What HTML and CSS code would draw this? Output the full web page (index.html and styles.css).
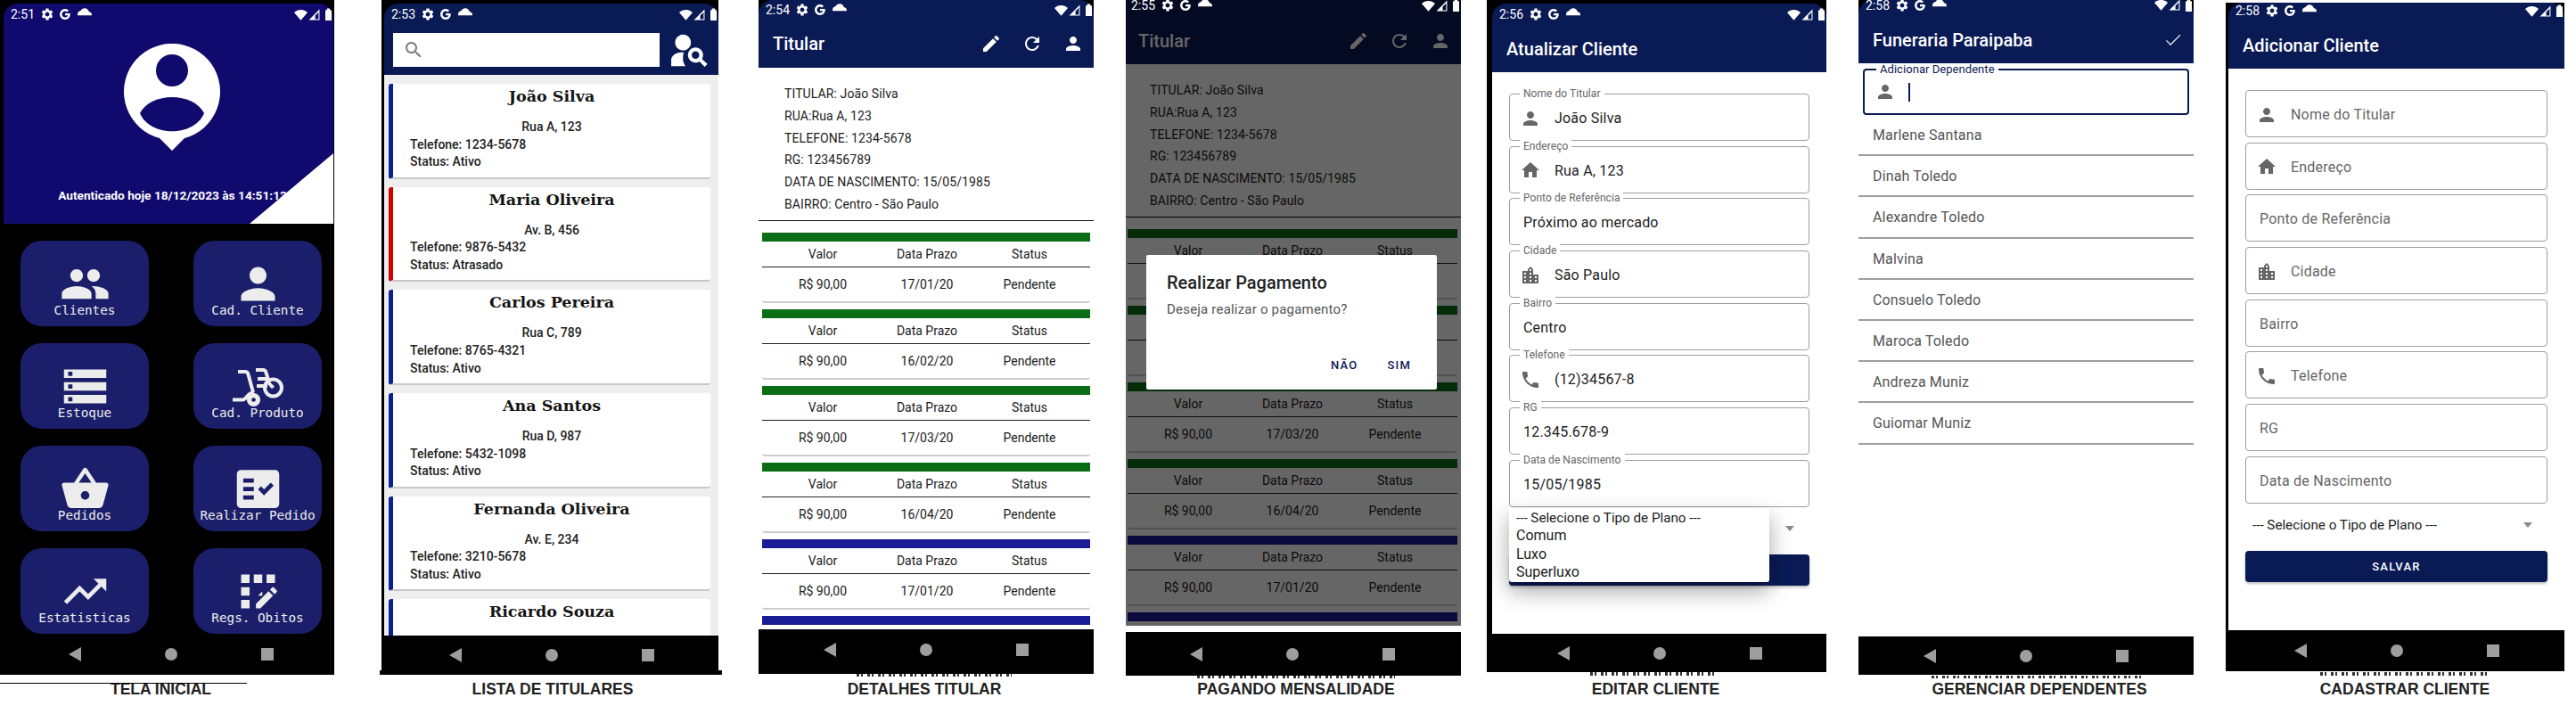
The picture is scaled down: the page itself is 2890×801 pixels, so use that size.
FILE: index.html
```html
<!DOCTYPE html>
<html lang="pt-BR">
<head>
<meta charset="utf-8">
<title>Telas do aplicativo</title>
<link rel="stylesheet" href="styles.css">
</head>
<body>
<svg class="sprite" aria-hidden="true">
  <symbol id="i-gear" viewBox="0 0 24 24"><path d="M19.14 12.94c.04-.3.06-.61.06-.94 0-.32-.02-.64-.07-.94l2.03-1.58c.18-.14.23-.41.12-.61l-1.92-3.32c-.12-.22-.37-.29-.59-.22l-2.39.96c-.5-.38-1.03-.7-1.62-.94l-.36-2.54c-.04-.24-.24-.41-.48-.41h-3.84c-.24 0-.43.17-.47.41l-.36 2.54c-.59.24-1.13.57-1.62.94l-2.39-.96c-.22-.08-.47 0-.59.22L2.74 8.87c-.12.21-.08.47.12.61l2.03 1.58c-.05.3-.09.63-.09.94s.02.64.07.94l-2.03 1.58c-.18.14-.23.41-.12.61l1.92 3.32c.12.22.37.29.59.22l2.39-.96c.5.38 1.03.7 1.62.94l.36 2.54c.05.24.24.41.48.41h3.84c.24 0 .44-.17.47-.41l.36-2.54c.59-.24 1.13-.56 1.62-.94l2.39.96c.22.08.47 0 .59-.22l1.92-3.32c.12-.22.07-.47-.12-.61l-2.01-1.58zM12 15.6c-1.98 0-3.6-1.62-3.6-3.6s1.62-3.6 3.6-3.6 3.6 1.62 3.6 3.6-1.62 3.6-3.6 3.6z"/></symbol>
  <symbol id="i-g" viewBox="0 0 24 24"><path d="M21.6 10.2H12v3.9h5.5c-.7 2.4-2.8 3.9-5.5 3.9-3.3 0-6-2.7-6-6s2.7-6 6-6c1.5 0 2.9.5 4 1.5l2.9-2.9C17 2.8 14.6 1.8 12 1.8 6.4 1.8 1.8 6.400 1.8 12S6.400 22.200 12 22.200c5.900 0 9.900-4.100 9.900-10 0-.7-.1-1.400-.3-2z"/></symbol>
  <symbol id="i-cloud" viewBox="0 0 24 24"><path d="M19.35 8.040C18.670 4.590 15.640 2 12 2 9.110 2 6.600 3.640 5.350 6.040 2.340 6.360 0 8.910 0 12v2h24v-1c0-2.640-2.050-4.780-4.650-4.960z"/></symbol>
  <symbol id="i-wifi" viewBox="0 0 24 24"><path d="M12 22L0 7.800C3.400 4.800 7.600 3 12 3s8.600 1.800 12 4.800z"/></symbol>
  <symbol id="i-cell" viewBox="0 0 24 24"><path fill-rule="evenodd" d="M23 1v22H1zM21 7l-7 7v7h7z"/></symbol>
  <symbol id="i-batt" viewBox="0 0 12 24"><path d="M3 4V1h6v3h2c.6 0 1 .4 1 1v18c0 .6-.4 1-1 1H1c-.6 0-1-.4-1-1V5c0-.6.4-1 1-1z"/></symbol>
  <symbol id="i-person" viewBox="0 0 24 24"><path d="M12 12c2.210 0 4-1.790 4-4s-1.790-4-4-4-4 1.790-4 4 1.790 4 4 4zm0 2c-2.670 0-8 1.340-8 4v2h16v-2c0-2.660-5.330-4-8-4z"/></symbol>
  <symbol id="i-people" viewBox="0 0 24 24"><path d="M16 11c1.660 0 2.990-1.340 2.990-3S17.660 5 16 5c-1.660 0-3 1.340-3 3s1.340 3 3 3zm-8 0c1.660 0 2.990-1.340 2.990-3S9.660 5 8 5C6.340 5 5 6.340 5 8s1.340 3 3 3zm0 2c-2.330 0-7 1.170-7 3.500V19h14v-2.500c0-2.330-4.670-3.500-7-3.500zm8 0c-.29 0-.62.02-.97.05 1.160.84 1.970 1.970 1.970 3.450V19h6v-2.500c0-2.330-4.670-3.500-7-3.500z"/></symbol>
  <symbol id="i-storage" viewBox="0 0 24 24"><path d="M2 20h20v-4H2v4zm2-3h2v2H4v-2zM2 4v4h20V4H2zm4 3H4V5h2v2zm-4 7h20v-4H2v4zm2-3h2v2H4v-2z"/></symbol>
  <symbol id="i-basket" viewBox="0 0 24 24"><path d="M17.210 9l-4.380-6.560c-.19-.28-.51-.42-.83-.42-.32 0-.64.14-.83.43L6.790 9H2c-.55 0-1 .45-1 1 0 .09.01.18.04.27l2.540 9.270c.23.840 1 1.460 1.920 1.460h13c.92 0 1.690-.62 1.930-1.460l2.540-9.270L23 10c0-.55-.45-1-1-1h-4.790zM9 9l3-4.400L15 9H9zm3 8c-1.100 0-2-.9-2-2s.9-2 2-2 2 .9 2 2-.9 2-2 2z"/></symbol>
  <symbol id="i-check-list" viewBox="0 0 24 24"><path d="M20 3H4c-1.100 0-2 .9-2 2v14c0 1.100.9 2 2 2h16c1.100 0 2-.9 2-2V5c0-1.100-.9-2-2-2zM10 17H5v-2h5v2zm0-4H5v-2h5v2zm0-4H5V7h5v2zm4.820 6L12 12.160l1.410-1.410 1.410 1.420L17.990 9l1.420 1.420L14.820 15z"/></symbol>
  <symbol id="i-trend" viewBox="0 0 24 24"><path d="M16 6l2.290 2.290-4.880 4.880-4-4L2 16.590 3.410 18l6-6 4 4 6.300-6.290L22 12V6z"/></symbol>
  <symbol id="i-reg" viewBox="0 0 24 24"><path d="M10 4h4v4h-4zM4 16h4v4H4zM4 10h4v4H4zM10 10h4v4h-4zM16 4h4v4h-4zM11 17.860V20h2.100l5.980-5.970-2.120-2.120zM14 12.030V10h-4v4h2.030zM20.850 11.560l-1.410-1.410c-.2-.2-.51-.2-.71 0l-1.060 1.060 2.120 2.120 1.060-1.060c.2-.2.2-.51 0-.71zM4 4h4v4H4z"/></symbol>
  <symbol id="i-edit" viewBox="0 0 24 24"><path d="M3 17.250V21h3.750L17.810 9.940l-3.750-3.750L3 17.250zM20.710 7.040c.39-.39.39-1.020 0-1.410l-2.340-2.340c-.39-.39-1.020-.39-1.410 0l-1.830 1.830 3.750 3.750 1.830-1.830z"/></symbol>
  <symbol id="i-refresh" viewBox="0 0 24 24"><path d="M17.650 6.350C16.200 4.900 14.210 4 12 4c-4.420 0-7.990 3.580-7.990 8s3.570 8 7.990 8c3.730 0 6.840-2.550 7.730-6h-2.080c-.82 2.330-3.040 4-5.650 4-3.310 0-6-2.690-6-6s2.690-6 6-6c1.660 0 3.140.69 4.220 1.780L13 11h7V4l-2.350 2.350z"/></symbol>
  <symbol id="i-home" viewBox="0 0 24 24"><path d="M10 20v-6h4v6h5v-8h3L12 3 2 12h3v8z"/></symbol>
  <symbol id="i-city" viewBox="0 0 24 24"><path d="M15 11V5l-3-3-3 3v2H3v14h18V11h-6zm-8 8H5v-2h2v2zm0-4H5v-2h2v2zm0-4H5V9h2v2zm6 8h-2v-2h2v2zm0-4h-2v-2h2v2zm0-4h-2V9h2v2zm0-4h-2V5h2v2zm6 12h-2v-2h2v2zm0-4h-2v-2h2v2z"/></symbol>
  <symbol id="i-phone" viewBox="0 0 24 24"><path d="M6.620 10.790c1.440 2.830 3.760 5.140 6.590 6.590l2.200-2.200c.27-.27.67-.36 1.020-.24 1.120.37 2.330.57 3.570.57.55 0 1 .45 1 1V20c0 .55-.45 1-1 1-9.390 0-17-7.610-17-17 0-.55.45-1 1-1h3.500c.55 0 1 .45 1 1 0 1.250.2 2.450.57 3.570.11.35.03.74-.25 1.020l-2.200 2.200z"/></symbol>
  <symbol id="i-check" viewBox="0 0 24 24"><path d="M9 16.170L4.830 12l-.8.8L9 18 20.500 6.500l-.8-.8z"/></symbol>
  <symbol id="i-search" viewBox="0 0 24 24"><path d="M15.500 14h-.79l-.28-.27C15.410 12.590 16 11.110 16 9.500 16 5.910 13.090 3 9.500 3S3 5.910 3 9.500 5.910 16 9.500 16c1.610 0 3.090-.59 4.230-1.570l.27.28v.79l5 4.990L20.490 19l-4.990-5zm-6 0C7.010 14 5 11.990 5 9.500S7.010 5 9.500 5 14 7.010 14 9.500 11.990 14 9.500 14z"/></symbol>
  <symbol id="i-person-search" viewBox="0 0 24 24"><path d="M11 12c2.210 0 4-1.790 4-4s-1.790-4-4-4-4 1.790-4 4 1.790 4 4 4zm.32 1.010C8.450 12.830 5 14.080 5 17v3h7.260c-.66-.87-1.110-1.970-1.260-3.180-.13-1.080.12-2.880.32-3.810zM20.590 16.450c.36-.59.58-1.280.58-2.020 0-2.130-1.710-3.850-3.840-3.850S13.500 12.300 13.500 14.430s1.720 3.850 3.830 3.850c.74 0 1.430-.22 2.010-.58L22 20.360l1.410-1.410-2.820-2.500zm-3.250-.17c-1.060 0-1.920-.86-1.920-1.920s.86-1.920 1.920-1.920 1.920.86 1.920 1.920-.86 1.920-1.920 1.920z"/></symbol>
  <symbol id="i-back" viewBox="0 0 14 16"><path d="M14 0v16L0 8z"/></symbol>
  <symbol id="i-wheel" viewBox="0 0 57 57">
    <g fill="none" stroke="currentColor" stroke-width="4">
      <path d="M6 12h8c2 0 3 1 3.500 3L23 35"/>
      <path d="M26 10h8c2 0 3 1 3.500 3L41 24"/>
      <path d="M28 20h12M27 28h12"/>
      <circle cx="45.500" cy="30" r="9.500"/>
      <path d="M38 22l7.500 8"/>
      <path d="M0 43.500h11c5 0 5-8 13-8"/>
    </g>
    <path d="M23.500 36a7.500 7.500 0 1 0 .01 0zm0 5.200a2.300 2.300 0 1 1-.01 0z" fill="currentColor"/>
  </symbol>
</svg>

<main class="gallery">

  <section class="shot s1">
    <div class="phone">
      <header class="hero">
        <div class="status"><span class="time">2:51</span><svg class="si"><use href="#i-gear"/></svg><svg class="si g"><use href="#i-g"/></svg><svg class="si"><use href="#i-cloud"/></svg><span class="status-right"><svg class="si w"><use href="#i-wifi"/></svg><svg class="si c"><use href="#i-cell"/></svg><svg class="si b"><use href="#i-batt"/></svg></span></div>
        <svg class="logo" viewBox="0 0 120 120">
          <path class="logo-bg" d="M46 106L60 120 74 106A54 54 0 1 0 46 106z"/>
          <circle class="logo-fg" cx="60" cy="30" r="18"/>
          <path class="logo-fg" d="M24 78C36 54 84 54 96 78 85 105 35 105 24 78z"/>
        </svg>
        <p class="auth">Autenticado hoje 18/12/2023 às 14:51:13</p>
      </header>
      <div class="tiles">
        <a class="tile"><svg class="tile-ic"><use href="#i-people"/></svg><span>Clientes</span></a>
        <a class="tile"><svg class="tile-ic"><use href="#i-person"/></svg><span>Cad. Cliente</span></a>
        <a class="tile"><svg class="tile-ic"><use href="#i-storage"/></svg><span>Estoque</span></a>
        <a class="tile"><svg class="tile-ic"><use href="#i-wheel"/></svg><span>Cad. Produto</span></a>
        <a class="tile"><svg class="tile-ic"><use href="#i-basket"/></svg><span>Pedidos</span></a>
        <a class="tile"><svg class="tile-ic"><use href="#i-check-list"/></svg><span>Realizar Pedido</span></a>
        <a class="tile"><svg class="tile-ic"><use href="#i-trend"/></svg><span>Estatisticas</span></a>
        <a class="tile"><svg class="tile-ic"><use href="#i-reg"/></svg><span>Regs. Obitos</span></a>
      </div>
      <nav class="nav"><svg class="nav-back"><use href="#i-back"/></svg><i class="nav-dot"></i><i class="nav-sq"></i></nav>
    </div>
    <div class="caption">TELA INICIAL</div>
  </section>

  <section class="shot s2">
    <div class="phone">
      <header class="bar">
        <div class="status"><span class="time">2:53</span><svg class="si"><use href="#i-gear"/></svg><svg class="si g"><use href="#i-g"/></svg><svg class="si"><use href="#i-cloud"/></svg><span class="status-right"><svg class="si w"><use href="#i-wifi"/></svg><svg class="si c"><use href="#i-cell"/></svg><svg class="si b"><use href="#i-batt"/></svg></span></div>
        <div class="search-row">
          <div class="search-box"><svg class="search-ic"><use href="#i-search"/></svg></div>
          <svg class="search-person"><use href="#i-person-search"/></svg>
        </div>
      </header>
      <div class="screen list-screen">
        <article class="card"><h2>João Silva</h2><p class="addr">Rua A, 123</p><p>Telefone: 1234-5678</p><p>Status: Ativo</p></article>
        <article class="card late"><h2>Maria Oliveira</h2><p class="addr">Av. B, 456</p><p>Telefone: 9876-5432</p><p>Status: Atrasado</p></article>
        <article class="card"><h2>Carlos Pereira</h2><p class="addr">Rua C, 789</p><p>Telefone: 8765-4321</p><p>Status: Ativo</p></article>
        <article class="card"><h2>Ana Santos</h2><p class="addr">Rua D, 987</p><p>Telefone: 5432-1098</p><p>Status: Ativo</p></article>
        <article class="card"><h2>Fernanda Oliveira</h2><p class="addr">Av. E, 234</p><p>Telefone: 3210-5678</p><p>Status: Ativo</p></article>
        <article class="card"><h2>Ricardo Souza</h2></article>
      </div>
      <nav class="nav"><svg class="nav-back"><use href="#i-back"/></svg><i class="nav-dot"></i><i class="nav-sq"></i></nav>
    </div>
    <div class="caption">LISTA DE TITULARES</div>
  </section>

  <section class="shot s3">
    <div class="phone">
      <header class="bar">
        <div class="status"><span class="time">2:54</span><svg class="si"><use href="#i-gear"/></svg><svg class="si g"><use href="#i-g"/></svg><svg class="si"><use href="#i-cloud"/></svg><span class="status-right"><svg class="si w"><use href="#i-wifi"/></svg><svg class="si c"><use href="#i-cell"/></svg><svg class="si b"><use href="#i-batt"/></svg></span></div>
        <div class="title-row"><h1>Titular</h1><span class="actions"><svg><use href="#i-edit"/></svg><svg><use href="#i-refresh"/></svg><svg><use href="#i-person"/></svg></span></div>
      </header>
      <div class="screen">
        <div class="details"><p>TITULAR: João Silva</p><p>RUA:Rua A, 123</p><p>TELEFONE: 1234-5678</p><p>RG: 123456789</p><p>DATA DE NASCIMENTO: 15/05/1985</p><p>BAIRRO: Centro - São Paulo</p></div>
        <div class="payments">
          <div class="pay"><div class="pay-head"><span>Valor</span><span>Data Prazo</span><span>Status</span></div><div class="pay-row"><span>R$ 90,00</span><span>17/01/20</span><span>Pendente</span></div></div>
          <div class="pay"><div class="pay-head"><span>Valor</span><span>Data Prazo</span><span>Status</span></div><div class="pay-row"><span>R$ 90,00</span><span>16/02/20</span><span>Pendente</span></div></div>
          <div class="pay"><div class="pay-head"><span>Valor</span><span>Data Prazo</span><span>Status</span></div><div class="pay-row"><span>R$ 90,00</span><span>17/03/20</span><span>Pendente</span></div></div>
          <div class="pay"><div class="pay-head"><span>Valor</span><span>Data Prazo</span><span>Status</span></div><div class="pay-row"><span>R$ 90,00</span><span>16/04/20</span><span>Pendente</span></div></div>
          <div class="pay blue"><div class="pay-head"><span>Valor</span><span>Data Prazo</span><span>Status</span></div><div class="pay-row"><span>R$ 90,00</span><span>17/01/20</span><span>Pendente</span></div></div>
          <div class="pay blue"><div class="pay-head"><span>Valor</span><span>Data Prazo</span><span>Status</span></div></div>
        </div>
      </div>
      <nav class="nav"><svg class="nav-back"><use href="#i-back"/></svg><i class="nav-dot"></i><i class="nav-sq"></i></nav>
    </div>
    <div class="caption">DETALHES TITULAR</div>
  </section>

  <section class="shot s4">
    <div class="phone">
      <div class="dim-area">
        <header class="bar">
          <div class="status"><span class="time">2:55</span><svg class="si"><use href="#i-gear"/></svg><svg class="si g"><use href="#i-g"/></svg><svg class="si"><use href="#i-cloud"/></svg><span class="status-right"><svg class="si w"><use href="#i-wifi"/></svg><svg class="si c"><use href="#i-cell"/></svg><svg class="si b"><use href="#i-batt"/></svg></span></div>
          <div class="title-row"><h1>Titular</h1><span class="actions"><svg><use href="#i-edit"/></svg><svg><use href="#i-refresh"/></svg><svg><use href="#i-person"/></svg></span></div>
        </header>
        <div class="screen">
          <div class="details"><p>TITULAR: João Silva</p><p>RUA:Rua A, 123</p><p>TELEFONE: 1234-5678</p><p>RG: 123456789</p><p>DATA DE NASCIMENTO: 15/05/1985</p><p>BAIRRO: Centro - São Paulo</p></div>
          <div class="payments">
            <div class="pay"><div class="pay-head"><span>Valor</span><span>Data Prazo</span><span>Status</span></div><div class="pay-row"></div></div>
            <div class="pay"><div class="pay-head"></div><div class="pay-row"></div></div>
            <div class="pay"><div class="pay-head"><span>Valor</span><span>Data Prazo</span><span>Status</span></div><div class="pay-row"><span>R$ 90,00</span><span>17/03/20</span><span>Pendente</span></div></div>
            <div class="pay"><div class="pay-head"><span>Valor</span><span>Data Prazo</span><span>Status</span></div><div class="pay-row"><span>R$ 90,00</span><span>16/04/20</span><span>Pendente</span></div></div>
            <div class="pay blue"><div class="pay-head"><span>Valor</span><span>Data Prazo</span><span>Status</span></div><div class="pay-row"><span>R$ 90,00</span><span>17/01/20</span><span>Pendente</span></div></div>
            <div class="pay blue"><div class="pay-head"></div></div>
          </div>
        </div>
        <div class="scrim"></div>
        <div class="dialog">
          <h3>Realizar Pagamento</h3>
          <p>Deseja realizar o pagamento?</p>
          <div class="dialog-actions"><span>NÃO</span><span>SIM</span></div>
        </div>
      </div>
      <div class="strip"></div>
      <nav class="nav"><svg class="nav-back"><use href="#i-back"/></svg><i class="nav-dot"></i><i class="nav-sq"></i></nav>
    </div>
    <div class="caption">PAGANDO MENSALIDADE</div>
  </section>

  <section class="shot s5">
    <div class="phone">
      <header class="bar">
        <div class="status"><span class="time">2:56</span><svg class="si"><use href="#i-gear"/></svg><svg class="si g"><use href="#i-g"/></svg><svg class="si"><use href="#i-cloud"/></svg><span class="status-right"><svg class="si w"><use href="#i-wifi"/></svg><svg class="si c"><use href="#i-cell"/></svg><svg class="si b"><use href="#i-batt"/></svg></span></div>
        <div class="title-row"><h1>Atualizar Cliente</h1></div>
      </header>
      <div class="screen form">
        <div class="field"><label>Nome do Titular</label><svg class="f-ic"><use href="#i-person"/></svg><span>João Silva</span></div>
        <div class="field"><label>Endereço</label><svg class="f-ic"><use href="#i-home"/></svg><span>Rua A, 123</span></div>
        <div class="field"><label>Ponto de Referência</label><span>Próximo ao mercado</span></div>
        <div class="field"><label>Cidade</label><svg class="f-ic"><use href="#i-city"/></svg><span>São Paulo</span></div>
        <div class="field"><label>Bairro</label><span>Centro</span></div>
        <div class="field"><label>Telefone</label><svg class="f-ic"><use href="#i-phone"/></svg><span>(12)34567-8</span></div>
        <div class="field"><label>RG</label><span>12.345.678-9</span></div>
        <div class="field"><label>Data de Nascimento</label><span>15/05/1985</span></div>
        <div class="select-wrap">
          <div class="select"><i class="caret"></i></div>
          <ul class="popup"><li>--- Selecione o Tipo de Plano ---</li><li>Comum</li><li>Luxo</li><li>Superluxo</li></ul>
        </div>
        <div class="save"></div>
      </div>
      <nav class="nav"><svg class="nav-back"><use href="#i-back"/></svg><i class="nav-dot"></i><i class="nav-sq"></i></nav>
    </div>
    <div class="caption">EDITAR CLIENTE</div>
  </section>

  <section class="shot s6">
    <div class="phone">
      <header class="bar">
        <div class="status"><span class="time">2:58</span><svg class="si"><use href="#i-gear"/></svg><svg class="si g"><use href="#i-g"/></svg><svg class="si"><use href="#i-cloud"/></svg><span class="status-right"><svg class="si w"><use href="#i-wifi"/></svg><svg class="si c"><use href="#i-cell"/></svg><svg class="si b"><use href="#i-batt"/></svg></span></div>
        <div class="title-row"><h1>Funeraria Paraipaba</h1><span class="actions"><svg><use href="#i-check"/></svg></span></div>
      </header>
      <div class="screen">
        <div class="field focused"><label>Adicionar Dependente</label><svg class="f-ic"><use href="#i-person"/></svg><i class="input-caret"></i></div>
        <ul class="names">
          <li>Marlene Santana</li><li>Dinah Toledo</li><li>Alexandre Toledo</li><li>Malvina</li><li>Consuelo Toledo</li><li>Maroca Toledo</li><li>Andreza Muniz</li><li>Guiomar Muniz</li>
        </ul>
      </div>
      <nav class="nav"><svg class="nav-back"><use href="#i-back"/></svg><i class="nav-dot"></i><i class="nav-sq"></i></nav>
    </div>
    <div class="caption">GERENCIAR DEPENDENTES</div>
  </section>

  <section class="shot s7">
    <div class="phone">
      <header class="bar">
        <div class="status"><span class="time">2:58</span><svg class="si"><use href="#i-gear"/></svg><svg class="si g"><use href="#i-g"/></svg><svg class="si"><use href="#i-cloud"/></svg><span class="status-right"><svg class="si w"><use href="#i-wifi"/></svg><svg class="si c"><use href="#i-cell"/></svg><svg class="si b"><use href="#i-batt"/></svg></span></div>
        <div class="title-row"><h1>Adicionar Cliente</h1></div>
      </header>
      <div class="screen form">
        <div class="field empty"><svg class="f-ic"><use href="#i-person"/></svg><span>Nome do Titular</span></div>
        <div class="field empty"><svg class="f-ic"><use href="#i-home"/></svg><span>Endereço</span></div>
        <div class="field empty"><span>Ponto de Referência</span></div>
        <div class="field empty"><svg class="f-ic"><use href="#i-city"/></svg><span>Cidade</span></div>
        <div class="field empty"><span>Bairro</span></div>
        <div class="field empty"><svg class="f-ic"><use href="#i-phone"/></svg><span>Telefone</span></div>
        <div class="field empty"><span>RG</span></div>
        <div class="field empty"><span>Data de Nascimento</span></div>
        <div class="select-wrap">
          <div class="select"><span>--- Selecione o Tipo de Plano ---</span><i class="caret"></i></div>
        </div>
        <button class="save">SALVAR</button>
      </div>
      <nav class="nav"><svg class="nav-back"><use href="#i-back"/></svg><i class="nav-dot"></i><i class="nav-sq"></i></nav>
    </div>
    <div class="caption">CADASTRAR CLIENTE</div>
  </section>

</main>
</body>
</html>
```

FILE: styles.css
```css
* { box-sizing: border-box; }
html, body { margin: 0; background: #fff; }
body { width: 2890px; height: 801px; overflow: hidden; font-family: Roboto, "Liberation Sans", sans-serif; color: #1c1c1c; }
p, h1, h2, h3, ul { margin: 0; padding: 0; }
ul { list-style: none; }
svg { display: block; fill: currentColor; }
.sprite { position: absolute; width: 0; height: 0; }

.gallery { display: flex; align-items: flex-start; }
.shot { flex: none; display: flex; flex-direction: column; }
.s1 { width: 375px; }
.s2 { width: 378px; margin-left: 53px; }
.s3 { width: 376px; margin-left: 45px; }
.s4 { width: 376px; margin-left: 36px; }
.s5 { width: 381px; margin-left: 29px; }
.s6 { width: 376px; margin-left: 36px; }
.s7 { width: 380px; margin-left: 36px; }

.phone { height: 757px; background: #000; display: flex; flex-direction: column; flex: none; }
.s1 .phone { padding: 4px 1px 0 4px; }
.s2 .phone { padding: 4px 0 0 3px; }
.s3 .phone { height: 756px; }
.s4 .phone { height: 758px; overflow: hidden; background: #fff; }
.s5 .phone { padding: 4px 0 0 6px; height: 754px; }
.s7 .phone { padding: 0 0 0 3px; margin-top: 3px; height: 750px; }

.bar { flex: none; background: #0a1a55; color: #fff; border-radius: 16px 16px 0 0; }
.status { display: flex; align-items: center; height: 24px; padding: 0 2px 0 8px; color: #fff; font-size: 14px; }
.s3 .status { height: 22px; }
.s4 .status { height: 12px; position: relative; z-index: 1; }
.s6 .status { height: 11px; }
.s7 .status { height: 18px; }
.time { width: 33px; }
.si { width: 16px; height: 16px; margin-right: 5px; flex: none; }
.si.g { width: 14px; height: 14px; margin: 0 7px 0 0; }
.status-right { margin-left: auto; display: flex; align-items: center; }
.si.w { width: 15px; height: 15px; margin-right: 1px; }
.si.c { width: 13px; height: 13px; margin-right: 6px; }
.si.b { width: 7px; height: 14px; margin: 0; }

.title-row { display: flex; align-items: center; justify-content: space-between; height: 54px; padding: 0 11px 0 16px; }
.s4 .title-row { height: 60px; padding-top: 7px; }
.s5 .title-row { height: 53px; }
.s6 .title-row { height: 60px; padding-top: 8px; }
.s7 .title-row { height: 56px; padding-top: 4px; }
h1 { font-size: 20px; font-weight: 500; }
.actions { display: flex; gap: 22px; }
.actions svg { width: 24px; height: 24px; }

.screen { flex: 1; min-height: 0; background: #fff; overflow: hidden; }

.nav { flex: none; height: 44px; display: flex; align-items: center; justify-content: center; gap: 94px; background: #000; position: relative; }
.nav-back { width: 14px; height: 16px; color: #9e9e9e; }
.nav-dot { width: 14px; height: 14px; border-radius: 50%; background: #9e9e9e; }
.nav-sq { width: 14px; height: 14px; background: #9e9e9e; }
.s1 .nav { height: 46px; padding-left: 6px; }
.s2 .nav::after { content: ""; position: absolute; left: -5px; right: -4px; bottom: 0; height: 5px; background: #000; }
.s3 .nav { height: 50px; padding-bottom: 4px; }
.s4 .nav { height: 49px; padding-right: 3px; }
.s5 .nav { height: 43px; }
.s6 .nav { height: 43px; }
.s7 .nav { height: 46px; }

.caption { height: 18px; margin-top: 7px; font: 700 17.500px/18px "Liberation Sans", Arial, sans-serif; color: #222; text-align: center; white-space: nowrap; position: relative; }
.s1 .caption { padding-right: 14px; }
.s2 .caption { padding-left: 6px; }
.s3 .caption { padding-right: 4px; margin-top: 8px; }
.s4 .caption { padding-left: 6px; margin-top: 6px; }
.s5 .caption { padding-right: 2px; margin-top: 10px; }
.s6 .caption { padding-left: 30px; }
.s7 .caption { padding-left: 22px; margin-top: 11px; }
.s1 .caption::before { content: ""; position: absolute; left: 0; top: 2px; width: 277px; height: 1px; background: #000; }
.s3 .caption::before, .s4 .caption::before, .s5 .caption::before, .s6 .caption::before, .s7 .caption::before { content: ""; position: absolute; top: -8px; height: 3px; background: repeating-linear-gradient(90deg, #333 0 3px, transparent 3px 5px, #333 5px 7px, transparent 7px 12px); }
.s3 .caption::before { left: 110px; width: 174px; }
.s4 .caption::before { left: 80px; width: 222px; top: -6px; }
.s5 .caption::before { left: 116px; width: 144px; top: -10px; height: 4px; }
.s6 .caption::before { left: 82px; width: 240px; top: -6px; }
.s7 .caption::before { left: 106px; width: 190px; top: -10px; height: 4px; }

/* tela inicial */
.hero { flex: none; height: 247px; padding-left: 9px; background: #100a6e; color: #fff; border-radius: 16px 16px 0 0; position: relative; display: flex; flex-direction: column; align-items: center; overflow: hidden; }
.hero::after { content: ""; position: absolute; right: 0; bottom: 0; width: 94px; height: 79px; background: #fff; clip-path: polygon(100% 0, 100% 100%, 0 100%); }
.hero .status { align-self: stretch; flex: none; margin-left: -9px; }
.logo { width: 120px; height: 120px; margin: 21px 2px 0 0; flex: none; }
.logo-bg { fill: #fff; }
.logo-fg { fill: #100a6e; }
.auth { margin-top: 41px; font-size: 13.700px; font-weight: 700; line-height: 18px; white-space: nowrap; }
.tiles { display: grid; grid-template-columns: 144px 144px; grid-auto-rows: 96px; column-gap: 50px; row-gap: 19px; padding: 19px 0 0 19px; flex: 1; min-height: 0; }
.tile { background: #1b1f6b; border-radius: 24px; color: #ececec; display: flex; flex-direction: column; align-items: center; padding-top: 20px; font: 14.300px/20px "DejaVu Sans Mono", "Liberation Mono", monospace; }
.tile-ic { width: 57px; height: 57px; margin-bottom: -9px; }
.tile span { position: relative; white-space: nowrap; }

/* lista */
.search-row { display: flex; align-items: center; height: 56px; padding-left: 10px; }
.search-box { width: 299px; height: 38px; background: #fff; color: #7a7a7a; display: flex; align-items: center; padding-left: 11px; }
.search-ic { width: 24px; height: 24px; }
.search-person { width: 53px; height: 53px; margin-left: 2px; }
.list-screen { background: #eee; padding: 10px 9px 0 5px; display: flex; flex-direction: column; gap: 9px; }
.card { flex: none; height: 106.700px; background: #fff; border-left: 5px solid #0a2296; border-bottom: 2px solid #c8c8c8; border-radius: 3px; padding-top: 1px; font-size: 14px; font-weight: 500; line-height: 19.700px; color: #222; }
.card.late { border-left-color: #d30000; }
.card h2 { font: 700 17.500px/26px "DejaVu Serif", "Liberation Serif", serif; color: #141414; text-align: center; margin-bottom: 12px; }
.card p { padding-left: 19px; }
.card .addr { padding-left: 0; text-align: center; }

/* detalhes */
.details { height: 172px; padding: 17px 0 0 29px; border-bottom: 1px solid #111; font-size: 14px; line-height: 24.800px; letter-spacing: .1px; }
.payments { padding: 13px 4px 0; }
.pay { height: 86px; }
.pay-head { height: 39px; border-top: 10px solid #0b6e17; border-bottom: 1px solid #222; display: grid; grid-template-columns: 136px 98px 132px; align-items: center; text-align: center; font-size: 14px; }
.pay.blue .pay-head { border-top-color: #1a1c96; }
.pay-row { height: 40px; border-bottom: 2px solid #ccc; border-radius: 0 0 3px 3px; display: grid; grid-template-columns: 136px 98px 132px; align-items: center; text-align: center; font-size: 14px; }

/* diálogo */
.s4 .phone { padding: 0; }
.dim-area { flex: 1; min-height: 0; display: flex; flex-direction: column; position: relative; overflow: hidden; background: #fff; }
.s4 .dim-area { margin-left: -2px; }
.s4 .bar { border-radius: 0; }
.scrim { position: absolute; inset: 0; background: rgba(0,0,0,.6); }
.dialog { position: absolute; left: 25px; top: 286px; width: 326px; height: 151px; background: #fff; border-radius: 2px; padding: 20px 23px 0; }
.dialog h3 { font-size: 20px; font-weight: 500; line-height: 22px; color: #222; }
.dialog p { margin-top: 9px; font-size: 15px; line-height: 20px; color: #555; letter-spacing: .2px; }
.dialog-actions { position: absolute; right: 29px; top: 114px; display: flex; gap: 33px; font-size: 13px; font-weight: 500; letter-spacing: 1.200px; color: #0a1a55; line-height: 20px; }
.strip { flex: none; height: 7px; background: #fff; margin-left: -2px; }

/* formulários */
.form { padding: 24px 19px 0; display: flex; flex-direction: column; gap: 5.700px; }
.field { flex: none; height: 53px; border: 1px solid #9e9e9e; border-radius: 4px; position: relative; display: flex; align-items: center; padding: 2px 0 0 15px; font-size: 16px; color: #222; letter-spacing: .2px; }
.field label { position: absolute; left: 11px; top: -8px; padding: 0 4px; background: #fff; font-size: 12px; line-height: 14px; color: #666; letter-spacing: .05px; }
.f-ic { width: 24px; height: 24px; color: #666; margin: 0 15px 0 -4px; flex: none; }
.field.empty { color: #666; }
.select-wrap { position: relative; flex: none; height: 41.700px; }
.select { height: 100%; display: flex; align-items: center; justify-content: space-between; padding: 0 17px 4px 8px; font-size: 15.200px; color: #222; }
.s5 .select { justify-content: flex-end; }
.caret { width: 0; height: 0; border: 5px solid transparent; border-top: 6px solid #8a8a8a; border-bottom: 0; }
.popup { position: absolute; left: 0; top: -5px; width: 292px; height: 83px; padding: 1px 8px 0; background: #fff; border-radius: 0 0 3px 3px; box-shadow: 0 10px 24px rgba(0,0,0,.35); font-size: 16px; line-height: 20.600px; z-index: 2; }
.popup li:first-child { font-size: 15.200px; }
.save { flex: none; height: 35px; border: 0; border-radius: 4px; background: #0a1a55; color: #fff; font: 500 13px/1 Roboto, sans-serif; letter-spacing: 1.250px; box-shadow: 0 2px 3px rgba(0,0,0,.25); }

/* dependentes */
.field.focused { margin: 6px 5px 0; border: 2px solid #0a1a55; height: 52px; padding-left: 15px; padding-top: 0; }
.field.focused label { color: #0a1a55; left: 13px; top: -8px; font-size: 13px; }
.field.focused .f-ic { margin-right: 14px; }
.input-caret { width: 2px; height: 21px; background: #0a1a55; }
.names li { height: 46.200px; padding-left: 16px; border-bottom: 2px solid #9e9e9e; font-size: 16px; line-height: 46px; color: #555; letter-spacing: .15px; }
```
